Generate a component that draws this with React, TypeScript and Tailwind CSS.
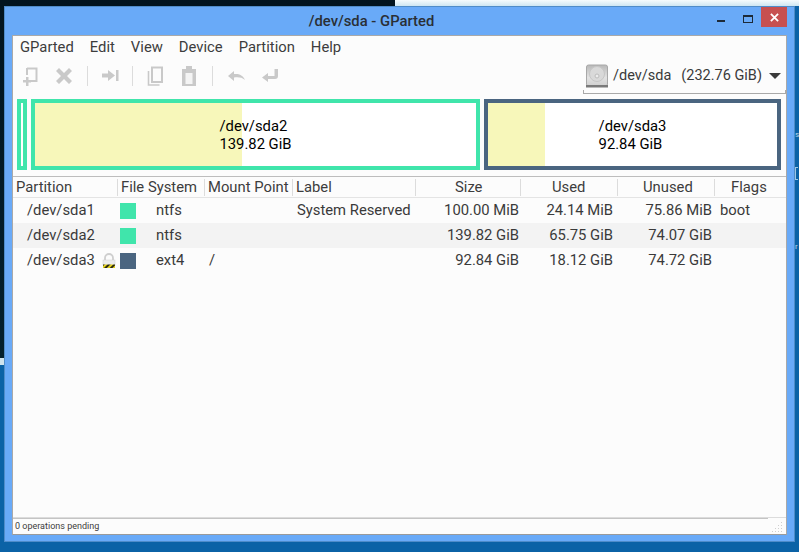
const COLUMNS = [
  { label: 'Partition', width: 'w-[105px]', cls: 'pl-[3px]' },
  { label: 'File System', width: 'w-[87px]', cls: 'pl-[3px]' },
  { label: 'Mount Point', width: 'w-[88px]', cls: 'pl-[3px]' },
  { label: 'Label', width: 'w-[123px]', cls: 'pl-[3px]' },
  { label: 'Size', width: 'w-[105px]', cls: 'pl-[39px]' },
  { label: 'Used', width: 'w-[97px]', cls: 'pl-[31px]' },
  { label: 'Unused', width: 'w-[97px]', cls: 'pl-[25px]' },
  { label: 'Flags', width: 'flex-1', cls: 'pl-[16px]' },
];

const ROWS = [
  { name: '/dev/sda1', color: 'bg-[#40e5ab]', fs: 'ntfs', mount: '', label: 'System Reserved', size: '100.00 MiB', used: '24.14 MiB', unused: '75.86 MiB', flags: 'boot', locked: false, stripe: false },
  { name: '/dev/sda2', color: 'bg-[#40e5ab]', fs: 'ntfs', mount: '', label: '', size: '139.82 GiB', used: '65.75 GiB', unused: '74.07 GiB', flags: '', locked: false, stripe: true },
  { name: '/dev/sda3', color: 'bg-[#4a6580]', fs: 'ext4', mount: '/', label: '', size: '92.84 GiB', used: '18.12 GiB', unused: '74.72 GiB', flags: '', locked: true, stripe: false },
];

function ToolIcon({ children, className }: { children: React.ReactNode; className: string }) {
  return (
    <svg viewBox="0 0 20 20" className={`h-5 w-5 shrink-0 ${className}`}>
      {children}
    </svg>
  );
}

function Sep({ className }: { className: string }) {
  return <div className={`h-5 w-px shrink-0 bg-[#dcdcdc] ${className}`} />;
}

function Toolbar() {
  return (
    <div className="flex h-[36px] items-center text-[#c9c9c9]">
      <ToolIcon className="ml-[7px]">
        <path d="M7 2.500h9.500V15H10" fill="none" stroke="currentColor" strokeWidth="2" />
        <path d="M7 2v7" stroke="currentColor" strokeWidth="2" />
        <path d="M6 11v3H3v2.500h3V20h2.500v-3.500H11V14H8.500v-3z" fill="currentColor" />
      </ToolIcon>
      <ToolIcon className="ml-[14px]">
        <path d="M2 5l3-3 5 5 5-5 3 3-5 5 5 5-3 3-5-5-5 5-3-3 5-5z" fill="currentColor" />
      </ToolIcon>
      <Sep className="ml-[13px]" />
      <ToolIcon className="ml-[12px]">
        <path d="M2 7.500h6V4l7 5.500-7 5.500v-3.500H2z" fill="currentColor" />
        <path d="M16 4h2.500v11H16z" fill="currentColor" />
      </ToolIcon>
      <Sep className="ml-[12px]" />
      <ToolIcon className="ml-[12px]">
        <path d="M3.500 5v14h11" fill="none" stroke="currentColor" strokeWidth="1.600" />
        <path d="M7 1.500h10V16H7z" fill="none" stroke="currentColor" strokeWidth="2" />
      </ToolIcon>
      <ToolIcon className="ml-[14px]">
        <path d="M3 3h4V0h6v3h4v17H3z" fill="currentColor" />
        <path d="M6.500 7h7v11h-7z" fill="#f4f4f4" />
      </ToolIcon>
      <Sep className="ml-[13px]" />
      <ToolIcon className="ml-[14px]">
        <path d="M1 10l6-5v3c5-.5 9 1 11 6-3-2.500-6-3-11-2.500V15z" fill="currentColor" />
      </ToolIcon>
      <ToolIcon className="ml-[13px]">
        <path d="M18 3v7c0 2-1 3-3 3H8v3l-6-4.500L8 7v3h6.500V3z" fill="currentColor" />
      </ToolIcon>
    </div>
  );
}

function DiskIcon() {
  return (
    <svg viewBox="0 0 22 24" className="h-6 w-[22px] shrink-0">
      <defs>
        <linearGradient id="disk" x1="0" y1="0" x2="0" y2="1">
          <stop offset="0" stopColor="#b8b8b8" />
          <stop offset="0.6" stopColor="#e2e2e2" />
          <stop offset="1" stopColor="#cfcfcf" />
        </linearGradient>
      </defs>
      <rect x="0.500" y="1" width="21" height="21" rx="2" fill="url(#disk)" stroke="#a8a8a8" />
      <circle cx="11" cy="10" r="7.500" fill="#d9d9d9" stroke="#c6c6c6" />
      <circle cx="11" cy="12" r="2" fill="#ececec" stroke="#bcbcbc" />
      <rect x="0" y="21" width="22" height="2.500" fill="#7a7a7a" />
    </svg>
  );
}

function LockIcon() {
  return (
    <svg viewBox="0 0 14 16" className="h-4 w-[14px] shrink-0">
      <defs>
        <pattern id="hazard" width="4" height="4" patternUnits="userSpaceOnUse" patternTransform="rotate(45)">
          <rect width="4" height="4" fill="#e4d21c" />
          <rect width="2" height="4" fill="#2c2a10" />
        </pattern>
      </defs>
      <path d="M3 8V5a4 4 0 0 1 8 0v3" fill="none" stroke="#cfcfcf" strokeWidth="1.800" />
      <rect x="1" y="7" width="12" height="5" fill="#ececec" stroke="#d0d0d0" strokeWidth="0.500" />
      <rect x="1" y="11.500" width="12" height="3.500" fill="url(#hazard)" />
    </svg>
  );
}

function GraphPart({ width, color, fill, name, size }: { width: string; color: string; fill: string; name: string; size: string }) {
  return (
    <div className={`grid h-[71px] border-4 bg-white ${width} ${color}`}>
      <div className={`[grid-area:1/1] h-full bg-[#f7f7ba] ${fill}`} />
      <div className="[grid-area:1/1] flex flex-col items-center justify-center">
        <div className="text-[14.800px] leading-[18px] text-black">
          <div>{name}</div>
          <div>{size}</div>
        </div>
      </div>
    </div>
  );
}

function DiskGraph() {
  return (
    <div className="flex gap-[4px] pl-[4px] pt-[5px]">
      <div className="h-[71px] w-[10px] border-4 border-[#40e5ab] bg-white" />
      <GraphPart width="w-[449px]" color="border-[#40e5ab]" fill="w-[207px]" name="/dev/sda2" size="139.82 GiB" />
      <GraphPart width="w-[297px]" color="border-[#4a6580]" fill="w-[57px]" name="/dev/sda3" size="92.84 GiB" />
    </div>
  );
}

function PartitionTable() {
  return (
    <div className="mt-[6px] flex flex-1 flex-col border-y border-t-[#bdbdbd] border-b-[#dcdcdc] bg-[#fcfcfc]">
      <div className="flex h-[21px] border-b border-[#e4e4e4] text-[14.800px] text-[#3d3d3d]">
        {COLUMNS.map((col) => (
          <div key={col.label} className={`flex items-center justify-between ${col.width} ${col.cls}`}>
            <span>{col.label}</span>
            {col.label !== 'Flags' && <span className="h-[17px] w-px bg-[#dcdcdc]" />}
          </div>
        ))}
      </div>
      {ROWS.map((row) => (
        <div key={row.name} className={`flex h-[25px] items-center text-[14.800px] text-[#3a3a3a] ${row.stripe ? 'bg-[#f3f3f3]' : ''}`}>
          <div className="flex w-[105px] items-center justify-between pl-[14px] pr-[2px]">
            <span>{row.name}</span>
            {row.locked && <LockIcon />}
          </div>
          <div className="flex w-[87px] items-center pl-[2px]">
            <span className={`h-4 w-4 shrink-0 ${row.color}`} />
            <span className="ml-5">{row.fs}</span>
          </div>
          <div className="w-[88px] pl-[4px]">{row.mount}</div>
          <div className="w-[123px] whitespace-nowrap pl-[4px]">{row.label}</div>
          <div className="w-[105px] pr-[2px] text-right">{row.size}</div>
          <div className="w-[97px] pr-[5px] text-right">{row.used}</div>
          <div className="w-[97px] pr-[3px] text-right">{row.unused}</div>
          <div className="flex-1 pl-[5px]">{row.flags}</div>
        </div>
      ))}
    </div>
  );
}

export default function App() {
  return (
    <div className="relative h-[552px] w-[799px] overflow-hidden bg-[#0b62a6] font-['Roboto',sans-serif]">
      {/* desktop behind the window */}
      <div className="absolute left-0 top-0 h-[358px] w-[395px] bg-gradient-to-b from-[#02141f] to-[#04202e]" />
      <div className="absolute left-[395px] top-0 h-[6px] w-[404px] bg-gradient-to-b from-[#f6fbfd] to-[#cfe6f2]" />
      <div className="absolute left-0 top-[358px] h-[7px] w-[4px] bg-[#cfe3ee]" />
      <div className="absolute left-[795px] top-[131px] text-[8px] leading-none text-[#bcd8ea]">s</div>
      <div className="absolute left-[795px] top-[167px] h-[13px] w-[3px] border-y border-l border-[#9cc6e4]" />
      <div className="absolute left-[795px] top-[243px] text-[8px] leading-none text-[#bcd8ea]">r</div>

      {/* window */}
      <div className="absolute left-[4px] top-[6px] flex h-[536px] w-[791px] flex-col border border-[#4f8cc9] bg-[#69aaf8] px-[7px] pb-[6px]">
        <div className="relative flex h-[28px] shrink-0 items-center justify-center pr-[56px]">
          <span className="text-[14.800px] font-medium text-[#2a2f35]">/dev/sda - GParted</span>
          <div className="absolute right-0 top-0 flex items-start">
            <div className="mr-[18px] mt-[13px] h-[2px] w-[8px] bg-[#1d2a38]" />
            <div className="mr-[8px] mt-[8px] h-[8px] w-[10px] border border-t-2 border-[#1d2a38]" />
            <div className="flex h-[20px] w-[26px] items-center justify-center bg-[#c75050]">
              <svg viewBox="0 0 10 10" className="h-[9px] w-[9px]">
                <path d="M1 1l8 8M9 1l-8 8" stroke="#fff" strokeWidth="2" />
              </svg>
            </div>
          </div>
        </div>

        <div className="flex flex-1 flex-col border border-[#a9a9a9] border-b-[#9a9a9a] bg-[#fcfcfc]">
          <div className="flex h-[22px] items-center gap-[16px] pl-[7px] text-[14.800px] text-[#3d3d3d]">
            <span>GParted</span>
            <span>Edit</span>
            <span>View</span>
            <span>Device</span>
            <span>Partition</span>
            <span>Help</span>
          </div>

          <div className="flex items-start justify-between">
            <Toolbar />
            <div className="relative flex h-[36px] w-[203px] items-center whitespace-nowrap border-b border-[#a9a9a9] pl-[3px] text-[14.500px] text-[#3a3a3a]">
              <DiskIcon />
              <span className="ml-[5px]">/dev/sda</span>
              <span className="ml-[10px]">(232.76 GiB)</span>
              <span className="ml-[7px] h-0 w-0 border-x-[6px] border-t-[6px] border-x-transparent border-t-[#3a3a3a]" />
              <span className="absolute bottom-0 left-0 h-[3px] w-px bg-[#a9a9a9]" />
              <span className="absolute bottom-0 right-0 h-[3px] w-px bg-[#a9a9a9]" />
            </div>
          </div>

          <DiskGraph />
          <PartitionTable />

          <div className="flex h-[16px] flex-col">
            <div className="mr-[18px] h-px shrink-0 bg-[#c4c4c4]" />
            <div className="flex flex-1 items-center justify-between pl-[2px] text-[9px] text-[#3d3d3d]">
              <span>0 operations pending</span>
              <svg viewBox="0 0 12 12" className="mr-[2px] h-3 w-3 text-[#cfcfcf]">
                <path d="M9 1h1v1H9zM9 4h1v1H9zM6 4h1v1H6zM9 7h1v1H9zM6 7h1v1H6zM3 7h1v1H3zM9 10h1v1H9zM6 10h1v1H6zM3 10h1v1H3zM0 10h1v1H0z" fill="currentColor" />
              </svg>
            </div>
          </div>
        </div>
      </div>
    </div>
  );
}
